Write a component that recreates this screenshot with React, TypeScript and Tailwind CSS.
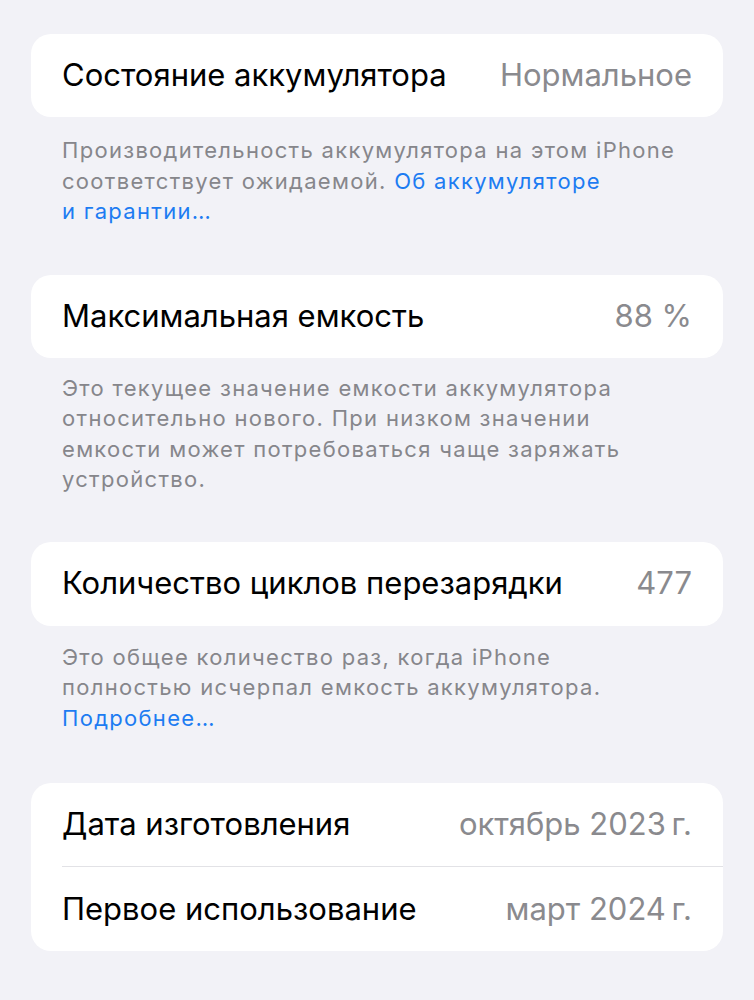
export default function App() {
  const font = { fontFamily: 'Inter, "Noto Sans", sans-serif' }
  return (
    <div className="min-h-[1000px] bg-[#f2f2f7] px-[31px] pt-[34px]" style={font}>
      <div className="flex h-[83px] items-center justify-between rounded-[20px] bg-white px-[31px]">
        <span className="text-[31px] text-black">Состояние аккумулятора</span>
        <span className="text-[31px] text-[#8a8a8e]">Нормальное</span>
      </div>
      <p className="px-[31px] pt-[18px] pb-[48px] text-[22px] leading-[30.5px] tracking-[1.3px] text-[#86868b]">
        Производительность аккумулятора на этом iPhone<br />
        соответствует ожидаемой. <span className="text-[#1d7cf2]">Об аккумуляторе<br />и гарантии…</span>
      </p>

      <div className="flex h-[83px] items-center justify-between rounded-[20px] bg-white px-[31px]">
        <span className="text-[31px] text-black">Максимальная емкость</span>
        <span className="text-[31px] text-[#8a8a8e]">88 %</span>
      </div>
      <p className="px-[31px] pt-[15px] pb-[47px] text-[22px] leading-[30.5px] tracking-[1.3px] text-[#86868b]">
        Это текущее значение емкости аккумулятора<br />
        относительно нового. При низком значении<br />
        емкости может потребоваться чаще заряжать<br />
        устройство.
      </p>

      <div className="flex h-[84px] items-center justify-between rounded-[20px] bg-white px-[31px]">
        <span className="text-[31px] text-black">Количество циклов перезарядки</span>
        <span className="text-[31px] text-[#8a8a8e]">477</span>
      </div>
      <p className="px-[31px] pt-[16px] pb-[50px] text-[22px] leading-[30.5px] tracking-[1.3px] text-[#86868b]">
        Это общее количество раз, когда iPhone<br />
        полностью исчерпал емкость аккумулятора.<br />
        <span className="text-[#1d7cf2]">Подробнее…</span>
      </p>

      <div className="rounded-[20px] bg-white pl-[31px]">
        <div className="flex h-[84px] items-center justify-between border-b border-[#e2e2e6] pr-[31px]">
          <span className="text-[31px] text-black">Дата изготовления</span>
          <span className="text-[31px] text-[#8a8a8e]">октябрь 2023{'\u2009'}г.</span>
        </div>
        <div className="flex h-[84px] items-center justify-between pr-[31px]">
          <span className="text-[31px] text-black">Первое использование</span>
          <span className="text-[31px] text-[#8a8a8e]">март 2024{'\u2009'}г.</span>
        </div>
      </div>
    </div>
  )
}
